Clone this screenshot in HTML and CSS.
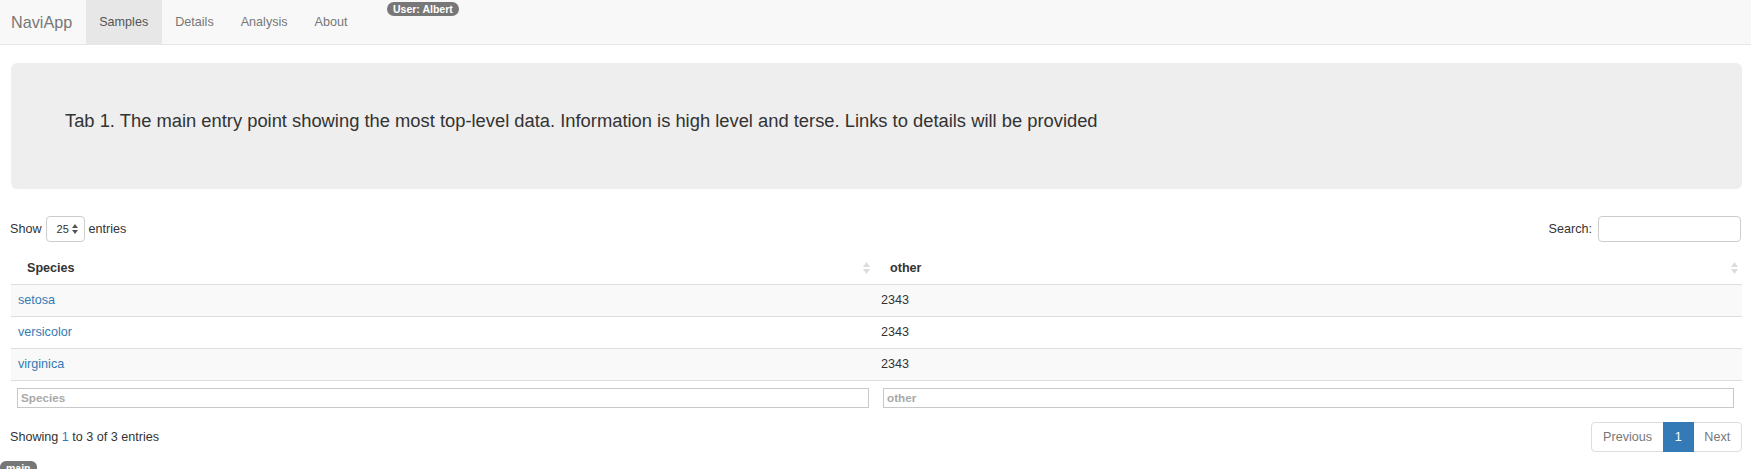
FILE: index.html
```html
<!DOCTYPE html>
<html lang="en">
<head>
<meta charset="utf-8">
<title>NaviApp</title>
<link rel="stylesheet" href="styles.css">
</head>
<body>
<nav class="navbar">
  <a class="brand" href="#">NaviApp</a>
  <ul class="nav">
    <li class="active"><a href="#">Samples</a></li>
    <li><a href="#">Details</a></li>
    <li><a href="#">Analysis</a></li>
    <li><a href="#">About</a></li>
  </ul>
  <span class="user-label">User: Albert</span>
</nav>

<main class="content">
  <div class="jumbotron">
    <p>Tab 1. The main entry point showing the most top-level data. Information is high level and terse. Links to details will be provided</p>
  </div>

  <div class="dt-top">
    <label class="length">Show
      <span class="select">25
        <svg width="6" height="10" viewBox="0 0 6 10"><path d="M3 0 L6 4 L0 4 Z" fill="#555"/><path d="M0 6 L6 6 L3 10 Z" fill="#555"/></svg>
      </span>
      entries</label>
    <label class="search">Search: <input type="search" class="search-input"></label>
  </div>

  <table class="dt">
    <colgroup><col class="c1"><col class="c2"></colgroup>
    <thead>
      <tr>
        <th><div class="th-inner"><span>Species</span>
          <svg class="sort" width="7" height="12" viewBox="0 0 7 12"><path d="M3.5 0 L7 5 L0 5 Z" fill="#dcdcdc"/><path d="M0 7 L7 7 L3.5 12 Z" fill="#dcdcdc"/></svg></div></th>
        <th><div class="th-inner"><span>other</span>
          <svg class="sort" width="7" height="12" viewBox="0 0 7 12"><path d="M3.5 0 L7 5 L0 5 Z" fill="#dcdcdc"/><path d="M0 7 L7 7 L3.5 12 Z" fill="#dcdcdc"/></svg></div></th>
      </tr>
    </thead>
    <tbody>
      <tr class="odd"><td><a href="#">setosa</a></td><td>2343</td></tr>
      <tr><td><a href="#">versicolor</a></td><td>2343</td></tr>
      <tr class="odd"><td><a href="#">virginica</a></td><td>2343</td></tr>
    </tbody>
    <tfoot>
      <tr>
        <td class="f1"><input type="text" class="filter" placeholder="Species"></td>
        <td class="f2"><input type="text" class="filter" placeholder="other"></td>
      </tr>
    </tfoot>
  </table>

  <div class="dt-bottom">
    <div class="info">Showing <span class="num">1</span> to 3 of 3 entries</div>
    <ul class="pagination">
      <li class="disabled"><a href="#">Previous</a></li>
      <li class="current"><a href="#">1</a></li>
      <li class="disabled"><a href="#">Next</a></li>
    </ul>
  </div>
</main>
<span class="branch-label">main</span>
</body>
</html>
```

FILE: styles.css
```css
* { box-sizing: border-box; }
html, body { margin: 0; padding: 0; }
body {
  font-family: "Liberation Sans", Arial, Helvetica, sans-serif;
  font-size: 12.6px;
  line-height: 18px;
  color: #333;
  background: #fff;
  height: 469px;
  overflow: hidden;
}
a { text-decoration: none; color: #337ab7; }

.navbar {
  display: flex;
  align-items: flex-start;
  height: 45px;
  background: #f8f8f8;
  border-bottom: 1px solid #e7e7e7;
}
.brand {
  display: block;
  padding: 0 13.5px 0 11px;
  line-height: 44px;
  font-size: 16.2px;
  color: #777;
}
.nav {
  display: flex;
  list-style: none;
  margin: 0;
  padding: 0;
}
.nav li a {
  display: block;
  padding: 0 13.5px;
  line-height: 44px;
  color: #777;
}
.nav li.active a {
  background: #e7e7e7;
  color: #555;
}
.user-label {
  margin: 2px 0 0 26px;
  padding: 0 6px;
  height: 14px;
  line-height: 14px;
  font-size: 10.5px;
  font-weight: bold;
  color: #fff;
  background: #777;
  border-radius: 8px;
}

.content {
  padding: 18px 9px 0 11px;
}
.jumbotron {
  background: #eee;
  border-radius: 6px;
  height: 126px;
  padding: 44px 54px 0 54px;
  margin-bottom: 26px;
}
.jumbotron p {
  margin: 0;
  font-size: 18.35px;
  line-height: 27px;
  color: #333;
}

.dt-top {
  display: flex;
  justify-content: space-between;
  align-items: center;
  height: 27px;
}
.length {
  display: flex;
  align-items: center;
  gap: 4px;
  margin-left: -1px;
}
.select {
  display: inline-flex;
  align-items: center;
  justify-content: space-between;
  width: 39px;
  height: 26px;
  padding: 0 6px 0 10px;
  border: 1px solid #ccc;
  border-radius: 4px;
  font-size: 11px;
  color: #333;
  background: #fff;
}
.search {
  display: flex;
  align-items: center;
  gap: 6px;
}
.search-input {
  width: 143px;
  height: 26px;
  border: 1px solid #ccc;
  border-radius: 4px;
  margin: 0 1px 0 0;
  padding: 0 6px;
  font: inherit;
}

.dt {
  width: 100%;
  border-collapse: collapse;
  margin-top: 10px;
  table-layout: fixed;
}
.dt col.c1 { width: 863px; }
.dt th {
  text-align: left;
  font-weight: bold;
  height: 32px;
  padding: 0 4px 0 16px;
  border-bottom: 1px solid #ddd;
}
.th-inner {
  display: flex;
  justify-content: space-between;
  align-items: center;
}
.dt tbody td {
  height: 32px;
  padding: 6px 7px 7px;
  border-bottom: 1px solid #ddd;
}
.dt tbody tr.odd td { background: #f9f9f9; }
.dt tfoot td {
  padding: 7px 5px 6px 6px;
}
.dt tfoot td.f2 { padding: 7px 8px 6px 9px; }
.filter {
  display: block;
  width: 100%;
  height: 20px;
  margin: 0;
  padding: 1px 3px;
  border: 1px solid #c8c8c8;
  font-family: inherit;
  font-size: 11.7px;
}
.filter::placeholder {
  color: #a9a9a9;
  font-weight: bold;
}

.dt-bottom {
  display: flex;
  justify-content: space-between;
  align-items: center;
  margin-top: 8px;
  height: 30px;
}
.info { margin-left: -1px; }
.info .num { color: #337ab7; }
.pagination {
  display: flex;
  list-style: none;
  margin: 0;
  padding: 0;
}
.pagination li a {
  display: block;
  height: 30px;
  line-height: 18px;
  padding: 5.5px 10.8px;
  border: 1px solid #ddd;
  margin-left: -1px;
  color: #777;
  background: #fff;
}
.pagination li:first-child a { border-radius: 4px 0 0 4px; margin-left: 0; }
.pagination li:last-child a { border-radius: 0 4px 4px 0; }
.pagination li.current a {
  background: #337ab7;
  border-color: #337ab7;
  color: #fff;
  position: relative;
}

.branch-label {
  display: inline-block;
  margin-top: 9px;
  padding: 0 6px;
  height: 16px;
  line-height: 14px;
  font-size: 10.5px;
  font-weight: bold;
  color: #fff;
  background: #777;
  border-radius: 6px;
}
```
